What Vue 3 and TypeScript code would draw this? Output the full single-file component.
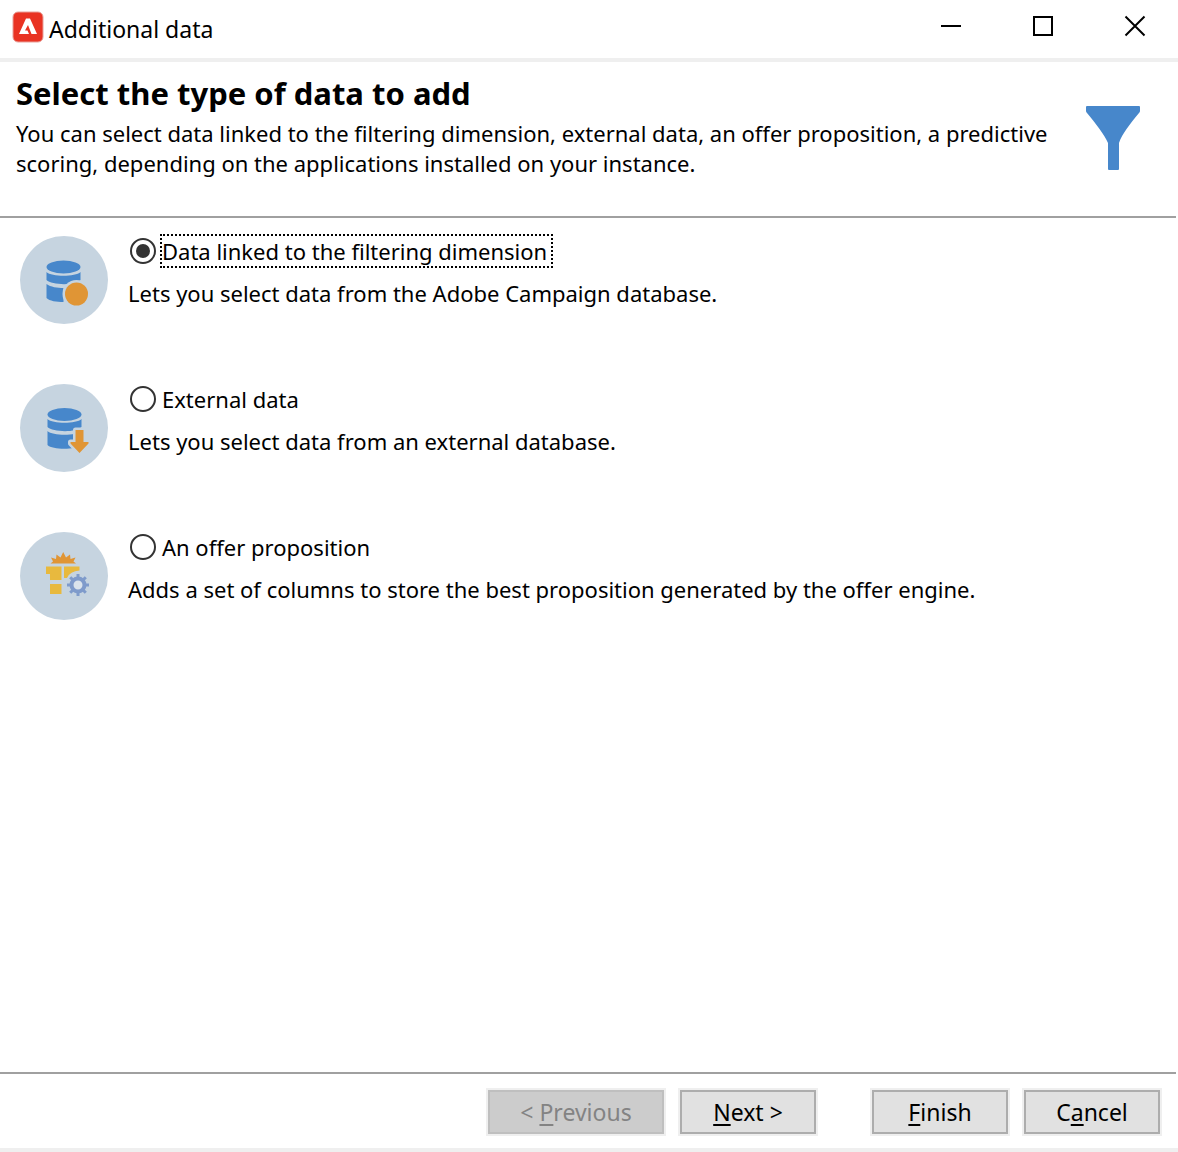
<script setup lang="ts">
import { ref } from 'vue'

interface Choice {
  id: string
  label: string
  description: string
}

const choices: Choice[] = [
  {
    id: 'linked',
    label: 'Data linked to the filtering dimension',
    description: 'Lets you select data from the Adobe Campaign database.',
  },
  {
    id: 'external',
    label: 'External data',
    description: 'Lets you select data from an external database.',
  },
  {
    id: 'offer',
    label: 'An offer proposition',
    description: 'Adds a set of columns to store the best proposition generated by the offer engine.',
  },
]

const selected = ref('linked')
</script>

<template>
  <main class="dialog">
    <header class="titlebar">
      <svg class="logo" viewBox="0 0 32 32" aria-hidden="true">
        <rect x="1" y="1" width="30" height="30" rx="5" fill="#e93323" stroke="#e8a09a" stroke-width="1" />
        <path d="M14 7.500h4L25 23h-5.500L16 14l-3 5.500h2.500l1.500 3.500H7z" fill="#fff" />
      </svg>
      <span class="title">Additional data</span>
      <div class="controls">
        <button type="button" class="control" aria-label="Minimize">
          <svg viewBox="0 0 24 24"><path d="M2 12h20" /></svg>
        </button>
        <button type="button" class="control" aria-label="Maximize">
          <svg viewBox="0 0 24 24"><path d="M3 3h18v18H3z" /></svg>
        </button>
        <button type="button" class="control" aria-label="Close">
          <svg viewBox="0 0 24 24"><path d="M2.500 2.500l19 19M21.500 2.500l-19 19" /></svg>
        </button>
      </div>
    </header>

    <section class="intro">
      <div class="intro-text">
        <h1>Select the type of data to add</h1>
        <p>
          You can select data linked to the filtering dimension, external data, an offer proposition, a predictive
          scoring, depending on the applications installed on your instance.
        </p>
      </div>
      <svg class="funnel" viewBox="0 0 54 64" aria-hidden="true">
        <path d="M1 0h52q1 0 1 1v4q0 1-1 2C44 18 36 28 33 37v26q0 1-1 1H23q-1 0-1-1V37C18 28 10 18 1 7Q0 6 0 5V1q0-1 1-1z" fill="#4787cb" />
      </svg>
    </section>

    <form class="choices">
      <div v-for="choice in choices" :key="choice.id" class="choice">
        <svg class="badge" viewBox="0 0 88 88" aria-hidden="true">
          <circle cx="44" cy="44" r="44" fill="#c6d4e0" />
          <template v-if="choice.id === 'linked'">
            <g fill="#4787cb">
              <ellipse cx="43.500" cy="31" rx="17" ry="6.500" />
              <path d="M26.500 36c5 5 29 5 34 0v8c-6 6-29 5-34 0z" />
              <path d="M26.500 48c4 3 11 4 17 4v14c-7 0-14-1-17-4z" />
            </g>
            <circle cx="56.500" cy="58" r="14" fill="#c6d4e0" />
            <circle cx="56.500" cy="58" r="11.500" fill="#e09535" />
          </template>
          <template v-else-if="choice.id === 'external'">
            <g fill="#4787cb">
              <ellipse cx="44.500" cy="30.500" rx="17" ry="6.500" />
              <path d="M27.500 35c5 5 29 5 34 0v8c-6 6-29 5-34 0z" />
              <path d="M27.500 47c5 5 29 5 34 0v14c-6 5-29 5-34 0z" />
            </g>
            <path
              d="M55.500 46h8v12h5v1.500L59.500 69 50.500 59.500V58h5z"
              fill="#c6d4e0"
              stroke="#c6d4e0"
              stroke-width="5"
              stroke-linejoin="round"
            />
            <path d="M55.500 46h8v12h5v1.500L59.500 69 50.500 59.500V58h5z" fill="#e09535" />
          </template>
          <template v-else>
            <path d="M30.500 31.500L33 29.500 31 25.500 36 27 36.500 22.500 40.500 25.500 43.200 20 46 25.500 50 22.500 50.500 27 55.500 25.500 53.500 29.500 56 31.500z" fill="#e09535" />
            <g fill="#e8b93e">
              <path d="M26 34.500h15.500V48H30v-6h-4zM44 34.500h15.500v4Q50 39 47 46h-3zM30 52h11.500v10H30z" />
            </g>
            <g stroke="#7f9bcb" stroke-width="3">
              <path d="M58 42v22M47 53h22M50.200 45.200l15.600 15.600M65.800 45.200L50.200 60.800" />
            </g>
            <circle cx="58" cy="53" r="6.500" fill="#dbe4ec" stroke="#7f9bcb" stroke-width="4" />
          </template>
        </svg>
        <div class="choice-text">
          <div class="option">
            <input
              :id="choice.id"
              v-model="selected"
              type="radio"
              name="data-type"
              :value="choice.id"
              :aria-describedby="`${choice.id}-description`"
            />
            <label :for="choice.id" :class="{ focused: selected === choice.id }">{{ choice.label }}</label>
          </div>
          <p :id="`${choice.id}-description`">{{ choice.description }}</p>
        </div>
      </div>
    </form>

    <footer class="actions">
      <button type="button" class="action previous" disabled>&lt; <u>P</u>revious</button>
      <button type="button" class="action next"><u>N</u>ext &gt;</button>
      <button type="button" class="action"><u>F</u>inish</button>
      <button type="button" class="action">C<u>a</u>ncel</button>
    </footer>
  </main>
</template>

<style>
body {
  margin: 0;
  background: #fff;
}
</style>

<style scoped>
.dialog {
  box-sizing: border-box;
  display: flex;
  flex-direction: column;
  min-height: 100vh;
  border-bottom: 4px solid #efefef;
  background: #fff;
  color: #000;
  font-family: "Noto Sans", "Open Sans", sans-serif;
  font-size: 22px;
  line-height: 30px;
}

h1,
p {
  margin: 0;
}

.titlebar {
  display: flex;
  align-items: center;
  height: 58px;
  padding-left: 12px;
  border-bottom: 4px solid #efefef;
  font-size: 23px;
}

.logo {
  width: 32px;
  height: 32px;
  margin-bottom: 4px;
}

.title {
  margin-left: 5px;
}

.controls {
  display: flex;
  margin-left: auto;
  margin-bottom: 6px;
}

.control {
  display: flex;
  align-items: center;
  justify-content: flex-end;
  box-sizing: border-box;
  width: 92px;
  height: 52px;
  padding: 0 31px 0 0;
  border: 0;
  background: none;
}

.control svg {
  width: 24px;
  height: 24px;
  fill: none;
  stroke: #000;
  stroke-width: 2;
}

.intro {
  display: flex;
  justify-content: space-between;
  gap: 8px;
  margin-right: 2px;
  padding: 12px 36px 38px 16px;
  border-bottom: 2px solid #a0a0a0;
}

h1 {
  margin-bottom: 6px;
  font-size: 31px;
  line-height: 38px;
}

.funnel {
  flex: none;
  width: 54px;
  height: 64px;
  margin-top: 32px;
}

.choices {
  display: flex;
  flex: 1;
  flex-direction: column;
  gap: 60px;
  padding: 18px 20px;
}

.choice {
  display: flex;
  gap: 20px;
}

.badge {
  flex: none;
  width: 88px;
  height: 88px;
}

.option {
  display: flex;
  align-items: center;
  gap: 4px;
  height: 30px;
  margin-bottom: 12px;
}

input {
  display: grid;
  place-items: center;
  box-sizing: border-box;
  width: 26px;
  height: 26px;
  margin: 0 0 0 2px;
  border: 2px solid #333;
  border-radius: 50%;
  background: #fff;
  appearance: none;
}

input:checked::before {
  width: 14px;
  height: 14px;
  border-radius: 50%;
  background: #333;
  content: "";
}

label {
  padding-right: 4px;
  border: 2px solid transparent;
}

label.focused {
  border: 2px dotted #000;
}

.actions {
  display: flex;
  justify-content: flex-end;
  gap: 16px;
  margin-right: 2px;
  padding: 16px 16px 14px;
  border-top: 2px solid #a0a0a0;
  font-size: 23px;
}

.action {
  width: 136px;
  height: 44px;
  padding: 0;
  border: 2px solid #adadad;
  background: #e1e1e1;
  box-shadow: 0 0 0 2px #efefef;
  color: #000;
  font: inherit;
}

.previous {
  width: 176px;
}

.next {
  margin-right: 40px;
}

.action:disabled {
  border-color: #bfbfbf;
  background: #ccc;
  color: #838383;
}

u {
  text-decoration-thickness: 2px;
  text-underline-offset: 3px;
}
</style>
